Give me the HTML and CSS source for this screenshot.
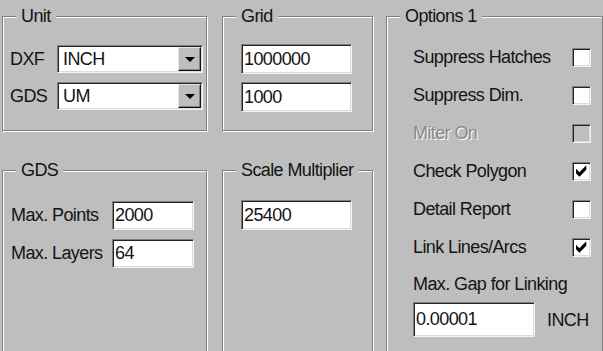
FILE: index.html
```html
<!DOCTYPE html>
<html lang="en">
<head>
<meta charset="utf-8">
<title>Options</title>
<link rel="stylesheet" href="styles.css">
</head>
<body>
<div class="dialog">
  <div class="left">
    <section class="group g-unit">
      <div class="title">Unit</div>
      <div class="form-row">
        <span class="lbl lbl-unit">DXF</span>
        <div class="combo sunken">
          <span class="combo-text">INCH</span>
          <span class="combo-btn"><svg width="10" height="5" viewBox="0 0 10 5"><polygon points="0,0 10,0 5,5" fill="#000"/></svg></span>
        </div>
      </div>
      <div class="form-row">
        <span class="lbl lbl-unit">GDS</span>
        <div class="combo sunken">
          <span class="combo-text">UM</span>
          <span class="combo-btn"><svg width="10" height="5" viewBox="0 0 10 5"><polygon points="0,0 10,0 5,5" fill="#000"/></svg></span>
        </div>
      </div>
    </section>

    <section class="group g-grid">
      <div class="title">Grid</div>
      <div class="edit sunken e-wide">1000000</div>
      <div class="edit sunken e-wide">1000</div>
    </section>

    <section class="group g-gds">
      <div class="title">GDS</div>
      <div class="form-row">
        <span class="lbl lbl-gds">Max. Points</span>
        <div class="edit sunken e-small">2000</div>
      </div>
      <div class="form-row">
        <span class="lbl lbl-gds">Max. Layers</span>
        <div class="edit sunken e-small">64</div>
      </div>
    </section>

    <section class="group g-scale">
      <div class="title">Scale Multiplier</div>
      <div class="edit sunken e-wide">25400</div>
    </section>
  </div>

  <section class="group g-options">
    <div class="title">Options 1</div>
    <div class="opt-row"><span>Suppress Hatches</span><span class="check sunken"></span></div>
    <div class="opt-row"><span>Suppress Dim.</span><span class="check sunken"></span></div>
    <div class="opt-row disabled"><span>Miter On</span><span class="check sunken"></span></div>
    <div class="opt-row"><span>Check Polygon</span><span class="check sunken"><svg width="12" height="12" viewBox="0 0 7 7"><polygon points="0,2.2 2,4.2 6,0.2 6,2.8 2,6.8 0,4.8" fill="#000"/></svg></span></div>
    <div class="opt-row"><span>Detail Report</span><span class="check sunken"></span></div>
    <div class="opt-row"><span>Link Lines/Arcs</span><span class="check sunken"><svg width="12" height="12" viewBox="0 0 7 7"><polygon points="0,2.2 2,4.2 6,0.2 6,2.8 2,6.8 0,4.8" fill="#000"/></svg></span></div>
    <div class="gap-label">Max. Gap for Linking</div>
    <div class="gap-row">
      <div class="edit sunken e-gap">0.00001</div>
      <span class="unit">INCH</span>
    </div>
  </section>
</div>
</body>
</html>
```

FILE: styles.css
```css
* { box-sizing: border-box; }
html, body { margin: 0; padding: 0; }
body {
  width: 603px;
  height: 351px;
  overflow: hidden;
  background: #bebebe;
  font-family: "Liberation Sans", Arial, sans-serif;
  font-size: 18px;
  letter-spacing: -0.6px;
  color: #141414;
}

.dialog {
  display: flex;
  column-gap: 13px;
  padding: 16px 0 0 2px;
}

.left {
  display: grid;
  grid-template-columns: 205px 151px;
  grid-template-rows: 115px 182px;
  column-gap: 15px;
  row-gap: 39px;
}

/* etched group box */
.group {
  position: relative;
  border: 1px solid #808080;
  box-shadow: inset 1px 1px #fff, 1px 1px #fff;
}
.title {
  position: absolute;
  top: -11px;
  left: 13px;
  padding: 0 5px;
  line-height: 20px;
  background: #bebebe;
  white-space: nowrap;
}

/* sunken field */
.sunken {
  border: 1px solid;
  border-color: #808080 #f4f4f4 #f4f4f4 #808080;
  box-shadow: inset 1px 1px #222, inset -1px -1px #dcdcdc;
  background: #fff;
}

.form-row {
  display: flex;
  align-items: center;
}

/* Unit */
.g-unit {
  display: flex;
  flex-direction: column;
  gap: 9px;
  padding: 28px 0 0 7px;
}
.lbl-unit { width: 47px; }
.combo {
  width: 146px;
  height: 28px;
  padding: 1px;
  display: flex;
  align-items: center;
}
.combo-text {
  flex: 1;
  padding-left: 4px;
}
.combo-btn {
  width: 23px;
  height: 24px;
  display: flex;
  align-items: center;
  justify-content: center;
  background: #bebebe;
  border: 1px solid;
  border-color: #e6e6e6 #111 #111 #e6e6e6;
  box-shadow: inset -1px -1px #808080;
}

/* edits */
.edit {
  display: flex;
  align-items: center;
  padding-left: 2px;
}
.e-wide { width: 111px; height: 30px; }
.e-small { width: 82px; height: 29px; }
.e-gap { width: 122px; height: 35px; }

/* Grid */
.g-grid {
  display: flex;
  flex-direction: column;
  gap: 8px;
  padding: 27px 0 0 18px;
}

/* GDS */
.g-gds {
  display: flex;
  flex-direction: column;
  gap: 9px;
  padding: 30px 0 0 8px;
}
.lbl-gds { width: 101px; }

/* Scale */
.g-scale {
  padding: 29px 0 0 18px;
}

/* Options */
.g-options {
  width: 230px;
  height: 336px;
  padding: 21px 0 0 26px;
}
.opt-row {
  width: 178px;
  height: 38px;
  display: flex;
  align-items: center;
  justify-content: space-between;
}
.check {
  width: 19px;
  height: 19px;
  display: flex;
  align-items: center;
  justify-content: center;
}
.disabled span:first-child {
  color: #8a8a8a;
  text-shadow: 1px 1px 0 #fff;
}
.disabled .check { background: #bebebe; }
.gap-label {
  height: 36px;
  display: flex;
  align-items: center;
}
.gap-row {
  display: flex;
  align-items: center;
  gap: 12px;
}
.unit { line-height: 20px; }
```
